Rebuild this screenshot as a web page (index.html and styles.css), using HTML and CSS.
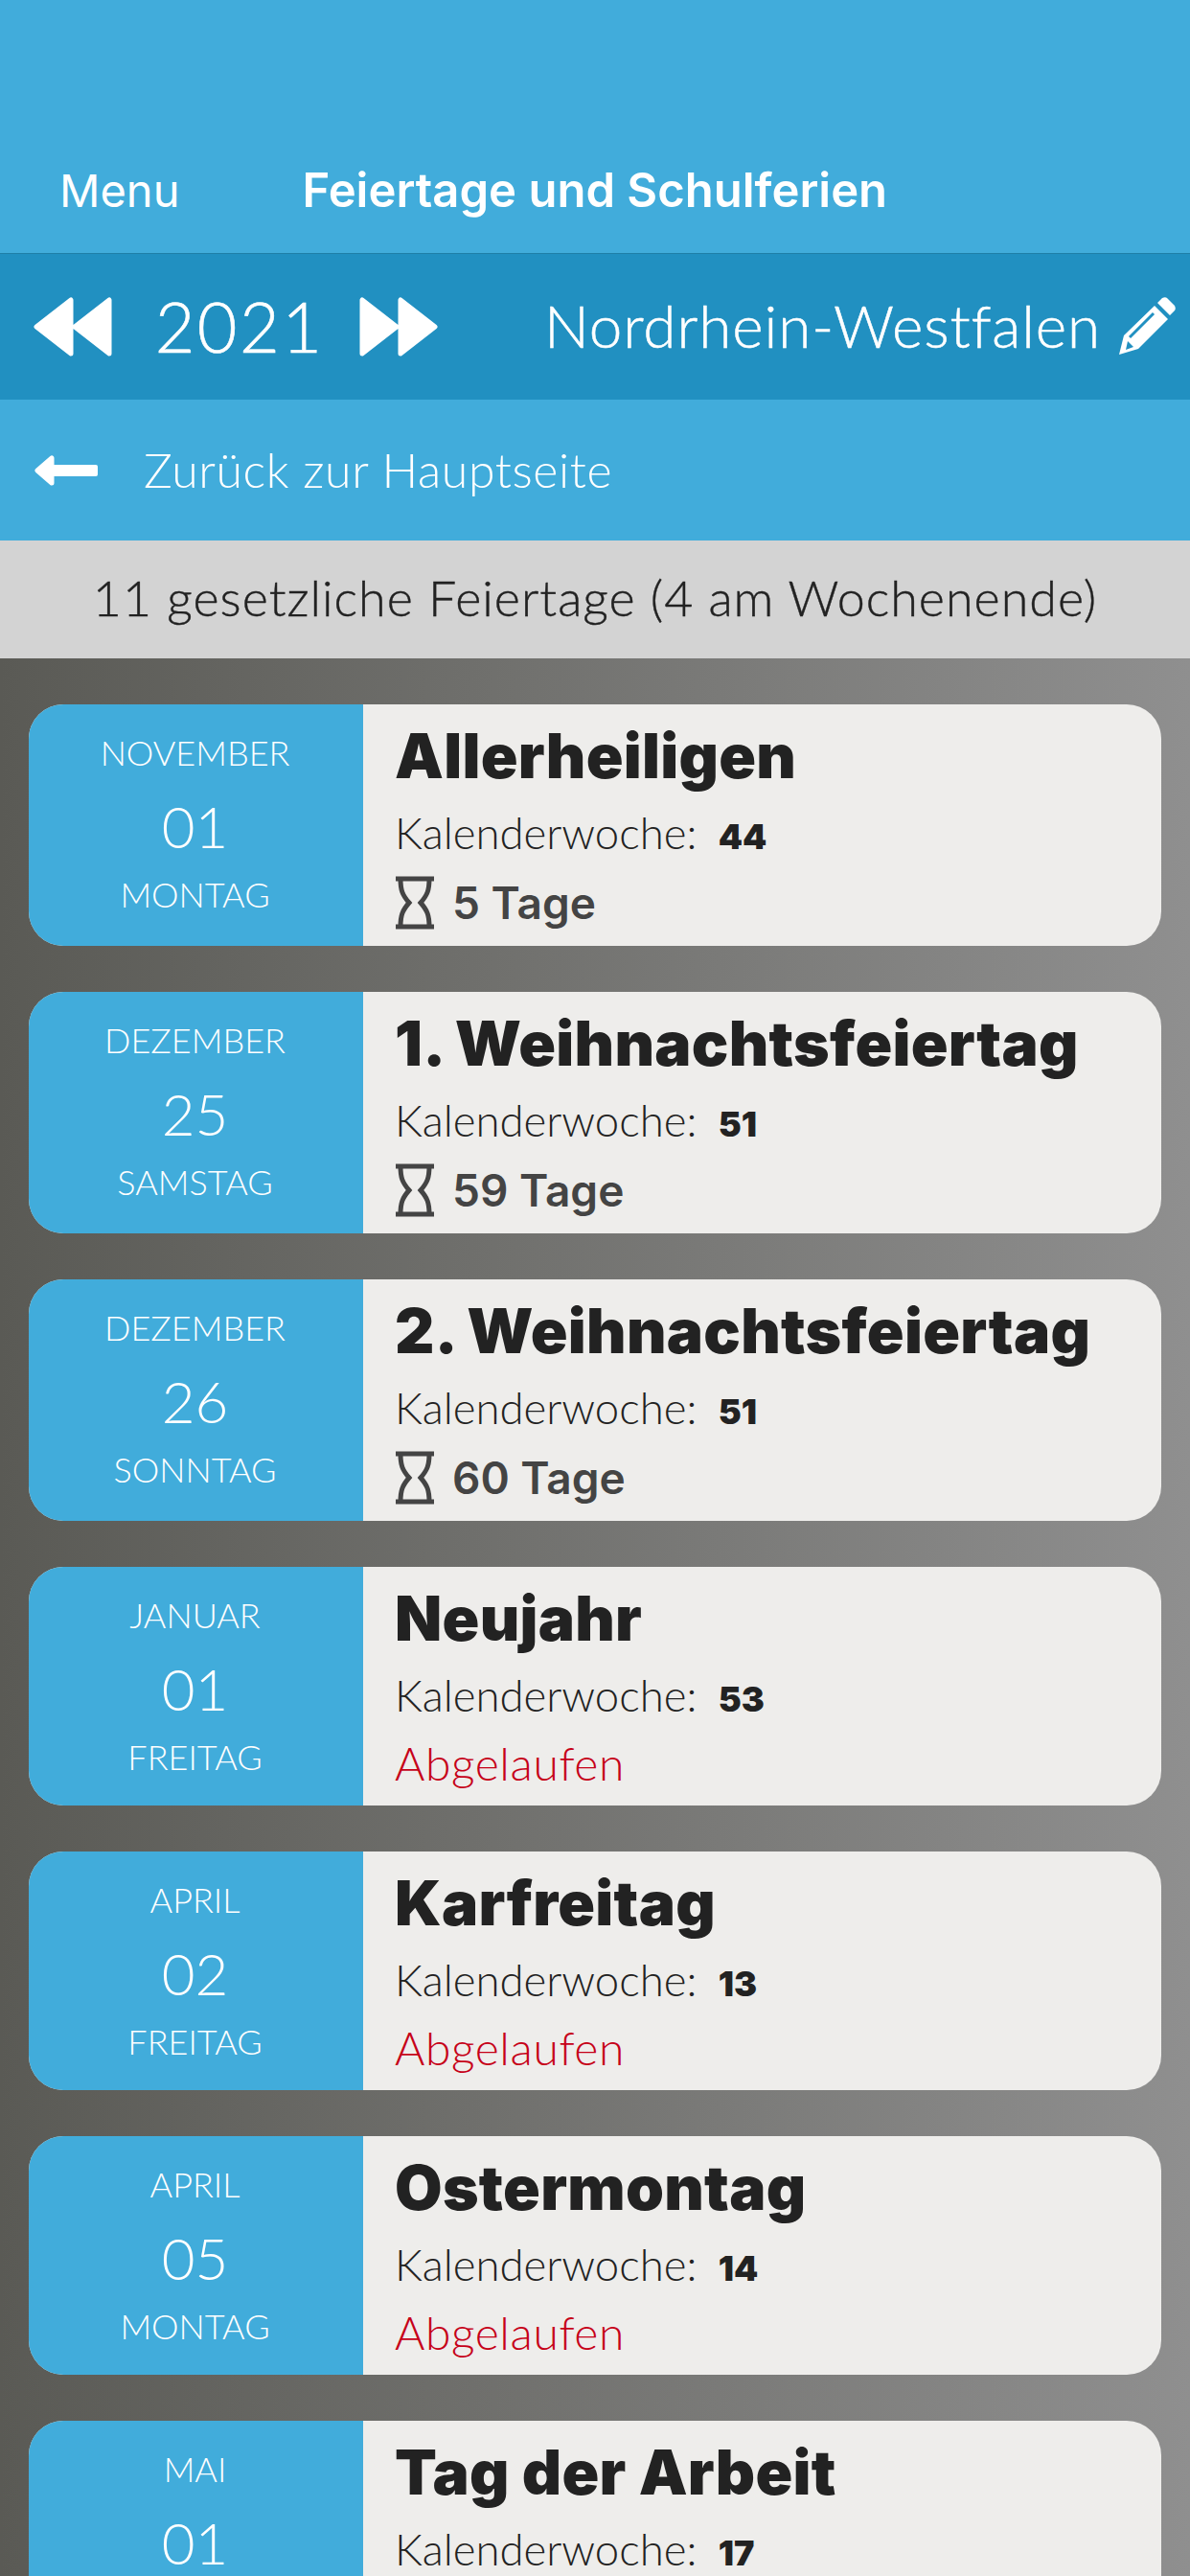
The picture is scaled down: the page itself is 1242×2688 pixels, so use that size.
FILE: index.html
```html
<!DOCTYPE html>
<html lang="de">
<head>
  <title>Feiertage und Schulferien</title>
  <meta charset="UTF-8">
  <meta name="viewport" content="width=device-width, initial-scale=1.0">
  <link rel="stylesheet" href="styles.css">
</head>
<body>
  <svg class="icon-defs" width="0" height="0">
    <symbol id="hourglass" viewBox="0 0 42 56">
      <path d="M1 3h40M1 53h40M6 3c0 12 2 17 9 25c-7 8-9 13-9 25M36 3c0 12-2 17-9 25c7 8 9 13 9 25M15 28h0M27 28h0" fill="none" stroke="currentColor" stroke-width="5" stroke-linecap="butt"/>
    </symbol>
    <symbol id="double-left" viewBox="0 0 82 62">
      <path d="M39 3v56L3 31zM79 3v56L43 31z" fill="currentColor" stroke="currentColor" stroke-width="5" stroke-linejoin="round"/>
    </symbol>
  </svg>

  <header class="topbar">
    <span class="menu">Menu</span>
    <h1 class="title">Feiertage und Schulferien</h1>
  </header>

  <div class="yearbar">
    <svg class="skip" width="82" height="62"><use href="#double-left"/></svg>
    <span class="year">2021</span>
    <svg class="skip flip" width="82" height="62"><use href="#double-left"/></svg>
    <span class="state">Nordrhein-Westfalen</span>
    <svg class="pencil" width="62" height="62" viewBox="0 0 62 62">
      <path d="M39 9l14 14l-31 31l-20 6l5-20zM42 6l5-5c2-1 4-1 5 0l8 8c1 2 1 4 0 5l-5 5z" fill="#fff"/>
      <path d="M38 17l-25 25" stroke="#2190c1" stroke-width="3" fill="none"/>
      <path d="M11 46l6 6l-8 3z" fill="#2190c1"/>
    </svg>
  </div>

  <a class="backbar">
    <svg width="66" height="32" viewBox="0 0 66 32">
      <path d="M18 3v26L3 16z" fill="#fff" stroke="#fff" stroke-width="5" stroke-linejoin="round"/>
      <rect x="17" y="10" width="49" height="12" rx="2" fill="#fff"/>
    </svg>
    <span>Zurück zur Hauptseite</span>
  </a>

  <div class="summary">11 gesetzliche Feiertage (4 am Wochenende)</div>

  <main class="list">
    <div class="card">
      <div class="date"><span>NOVEMBER</span><span class="day">01</span><span>MONTAG</span></div>
      <div class="info">
        <h2>Allerheiligen</h2>
        <p class="week">Kalenderwoche: <b>44</b></p>
        <p class="left"><svg width="42" height="56"><use href="#hourglass"/></svg>5 Tage</p>
      </div>
    </div>
    <div class="card">
      <div class="date"><span>DEZEMBER</span><span class="day">25</span><span>SAMSTAG</span></div>
      <div class="info">
        <h2>1. Weihnachtsfeiertag</h2>
        <p class="week">Kalenderwoche: <b>51</b></p>
        <p class="left"><svg width="42" height="56"><use href="#hourglass"/></svg>59 Tage</p>
      </div>
    </div>
    <div class="card">
      <div class="date"><span>DEZEMBER</span><span class="day">26</span><span>SONNTAG</span></div>
      <div class="info">
        <h2>2. Weihnachtsfeiertag</h2>
        <p class="week">Kalenderwoche: <b>51</b></p>
        <p class="left"><svg width="42" height="56"><use href="#hourglass"/></svg>60 Tage</p>
      </div>
    </div>
    <div class="card past">
      <div class="date"><span>JANUAR</span><span class="day">01</span><span>FREITAG</span></div>
      <div class="info">
        <h2>Neujahr</h2>
        <p class="week">Kalenderwoche: <b>53</b></p>
        <p class="expired">Abgelaufen</p>
      </div>
    </div>
    <div class="card past">
      <div class="date"><span>APRIL</span><span class="day">02</span><span>FREITAG</span></div>
      <div class="info">
        <h2>Karfreitag</h2>
        <p class="week">Kalenderwoche: <b>13</b></p>
        <p class="expired">Abgelaufen</p>
      </div>
    </div>
    <div class="card past">
      <div class="date"><span>APRIL</span><span class="day">05</span><span>MONTAG</span></div>
      <div class="info">
        <h2>Ostermontag</h2>
        <p class="week">Kalenderwoche: <b>14</b></p>
        <p class="expired">Abgelaufen</p>
      </div>
    </div>
    <div class="card past">
      <div class="date"><span>MAI</span><span class="day">01</span><span>SAMSTAG</span></div>
      <div class="info">
        <h2>Tag der Arbeit</h2>
        <p class="week">Kalenderwoche: <b>17</b></p>
        <p class="expired">Abgelaufen</p>
      </div>
    </div>
  </main>
</body>
</html>
```

FILE: styles.css
```css
html, body {
  height: 2688px;
  overflow: hidden;
}

body {
  margin: 0;
  padding: 0;
  font-family: Lato, "Liberation Sans", sans-serif;
  font-weight: 300;
  background-color: #41acdb;
}

.icon-defs {
  position: absolute;
}

.topbar {
  height: 265px;
  box-sizing: border-box;
  padding: 0 0 35px 62px;
  display: flex;
  align-items: flex-end;
  gap: 128px;
  border-bottom: 1px solid #1f7fa8;
  color: #fff;
  font-family: Inter, sans-serif;
}

.menu {
  font-size: 47px;
  font-weight: 400;
  line-height: 60px;
}

.title {
  margin: 0;
  font-size: 49px;
  font-weight: 600;
  line-height: 60px;
}

.yearbar {
  height: 152px;
  display: flex;
  align-items: center;
  padding: 0 14px 0 35px;
  background-color: #2190c1;
  color: #fff;
}

.skip.flip {
  transform: scaleX(-1);
}

.year {
  width: 250px;
  margin-left: 8px;
  padding-bottom: 2px;
  text-align: center;
  font-size: 72px;
  -webkit-text-stroke: 0.6px #fff;
  letter-spacing: 2.4px;
}

.state {
  margin-left: auto;
  margin-right: 17px;
  padding-bottom: 5px;
  font-size: 62px;
  -webkit-text-stroke: 0.5px #fff;
  letter-spacing: 0.9px;
}

.backbar {
  height: 147px;
  display: flex;
  align-items: center;
  gap: 48px;
  padding-left: 36px;
  color: #fff;
  font-size: 50px;
  letter-spacing: 0.6px;
}

.backbar span {
  padding-bottom: 2px;
}

.summary {
  height: 123px;
  box-sizing: border-box;
  padding-bottom: 5px;
  display: flex;
  justify-content: center;
  align-items: center;
  background-color: #d3d3d3;
  color: #222;
  font-size: 52px;
  -webkit-text-stroke: 0.4px #222;
  letter-spacing: 1px;
}

.list {
  display: flex;
  flex-direction: column;
  gap: 48px;
  padding: 48px 30px;
  background: linear-gradient(to right, #5a5a55, #8f8f8f);
}

.card {
  flex: none;
  display: flex;
  height: 252px;
  border-radius: 36px;
  overflow: hidden;
  background-color: #eeedeb;
}

.card.past {
  height: 249px;
}

.date {
  width: 349px;
  display: flex;
  flex-direction: column;
  justify-content: space-between;
  align-items: center;
  box-sizing: border-box;
  padding: 28px 2px 32px 0;
  background-color: #41acdb;
  color: #fff;
  font-size: 36px;
}

.past .date {
  padding-bottom: 29px;
}

.day {
  position: relative;
  top: 3px;
  font-size: 60px;
}

.info {
  flex: 1;
  padding: 14px 0 0 33px;
  color: #222;
}

.info h2 {
  margin: 0;
  font-family: Inter, sans-serif;
  font-size: 64px;
  font-weight: 900;
  line-height: 80px;
  letter-spacing: 0.3px;
}

.week {
  margin: 13px 0 0;
  font-size: 45.5px;
  line-height: 54px;
}

.week b {
  margin-left: 10px;
  font-family: Inter, sans-serif;
  font-size: 36px;
  font-weight: 900;
}

.left {
  display: flex;
  align-items: center;
  gap: 18px;
  margin: 14px 0 0;
  color: #444;
  font-family: Inter, sans-serif;
  font-size: 46px;
  font-weight: 600;
}

.expired {
  margin: 12px 0 0;
  color: #c60018;
  font-size: 48px;
  letter-spacing: 0.6px;
  line-height: 56px;
}
```
